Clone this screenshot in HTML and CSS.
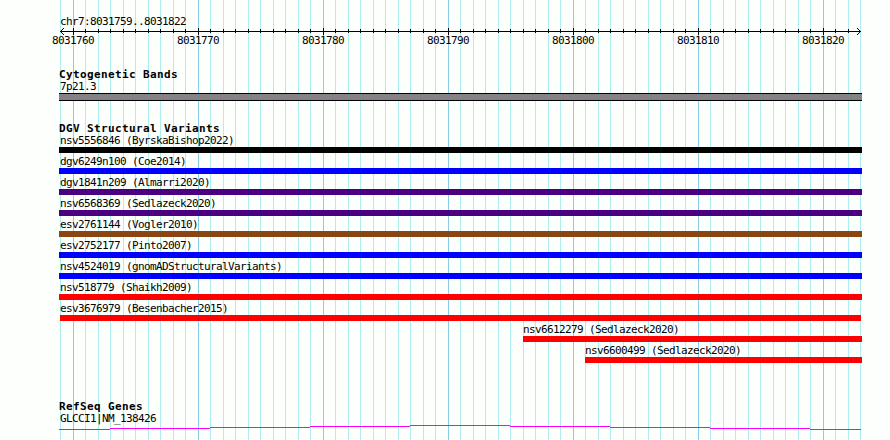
FILE: index.html
```
<!DOCTYPE html>
<html lang="en">
<head>
    <meta charset="UTF-8">
    <title>chr7:8031759..8031822</title>
    <link rel="stylesheet" href="styles.css">
</head>
<body>
    <div class="panel">
        <div class="ruler">
            <p class="label">chr7:8031759..8031822</p>
            <div class="axis">
                <svg class="arrow" width="5" height="7" viewBox="0 0 5 7" shape-rendering="crispEdges">
                    <path d="M1 3h1v1h-1zM2 2h1v3h-1zM3 1h1v1h-1zM3 5h1v1h-1zM4 0h1v1h-1zM4 6h1v1h-1z"/>
                </svg>
                <svg class="arrow" width="5" height="7" viewBox="0 0 5 7" shape-rendering="crispEdges">
                    <path d="M4 3h1v1h-1zM3 2h1v3h-1zM2 1h1v1h-1zM2 5h1v1h-1zM1 0h1v1h-1zM1 6h1v1h-1z"/>
                </svg>
            </div>
            <div class="positions">
                <span>8031760</span>
                <span>8031770</span>
                <span>8031780</span>
                <span>8031790</span>
                <span>8031800</span>
                <span>8031810</span>
                <span>8031820</span>
            </div>
        </div>

        <section class="track cytoband">
            <h2>Cytogenetic Bands</h2>
            <p class="label">7p21.3</p>
            <div class="band"></div>
        </section>

        <section class="track variants">
            <h2>DGV Structural Variants</h2>
            <div class="feature black"><p class="label">nsv5556846 (ByrskaBishop2022)</p></div>
            <div class="feature blue"><p class="label">dgv6249n100 (Coe2014)</p></div>
            <div class="feature indigo"><p class="label">dgv1841n209 (Almarri2020)</p></div>
            <div class="feature indigo"><p class="label">nsv6568369 (Sedlazeck2020)</p></div>
            <div class="feature brown"><p class="label">esv2761144 (Vogler2010)</p></div>
            <div class="feature blue"><p class="label">esv2752177 (Pinto2007)</p></div>
            <div class="feature blue"><p class="label">nsv4524019 (gnomADStructuralVariants)</p></div>
            <div class="feature red"><p class="label">nsv518779 (Shaikh2009)</p></div>
            <div class="feature red inset"><p class="label">esv3676979 (Besenbacher2015)</p></div>
            <div class="feature red from-796"><p class="label">nsv6612279 (Sedlazeck2020)</p></div>
            <div class="feature red from-801"><p class="label">nsv6600499 (Sedlazeck2020)</p></div>
        </section>

        <section class="track genes">
            <h2>RefSeq Genes</h2>
            <p class="label">GLCCI1|NM_138426</p>
            <svg class="intron" width="803" height="5" viewBox="0 0 803 5" shape-rendering="crispEdges">
                <path d="M0 4.5H51M51 3.5H151M151 2.5H251M251 1.5H351M351 .5H451M451 1.5H551M551 2.5H651M651 3.5H751M751 4.5H802"/>
            </svg>
        </section>
    </div>
</body>
</html>
```
FILE: styles.css
```
body {
    margin: 0;
    background: #fdfffc;
    color: #000;
    font-family: "DejaVu Sans Mono", "Liberation Mono", monospace;
    font-size: 11px;
    line-height: 14px;
}

p, h2 {
    margin: 0;
}

/* one base is 12.5px, so the grid repeats every 25px, and every 125px for the tens */
.panel {
    box-sizing: border-box;
    width: 803px;
    height: 440px;
    margin-left: 59px;
    padding-top: 15px;
    background:
        repeating-linear-gradient(to right, transparent 0 14px, #87ceeb 14px 15px, transparent 15px 125px),
        repeating-linear-gradient(to right, transparent 0 1px, #afeeee 1px 2px, transparent 2px 14px, #afeeee 14px 15px, transparent 15px 25px);
}

.label {
    height: 12px;
    padding-left: 1px;
    letter-spacing: -0.622px;
    white-space: nowrap;
}

h2 {
    height: 12px;
    font-size: 11px;
    font-weight: bold;
    letter-spacing: 0.378px;
}

/* axis line, then the long ticks, then the short ones */
.axis {
    display: flex;
    justify-content: space-between;
    height: 7px;
    margin-top: 1px;
    padding-right: 1px;
    background:
        linear-gradient(#000, #000) 1px 3px / 801px 1px no-repeat,
        repeating-linear-gradient(to right, transparent 0 14px, #000 14px 15px, transparent 15px 125px) 0 0 / 801px 7px no-repeat,
        repeating-linear-gradient(to right, #000 0 1px, transparent 1px 12px, #000 12px 13px, transparent 13px 25px) 14px 1px / 776px 4px no-repeat;
}

.arrow {
    display: block;
}

.positions {
    display: grid;
    grid-template-columns: repeat(7, 125px);
    height: 12px;
    margin-left: -7px;
    letter-spacing: -0.622px;
    line-height: 12px;
}

.cytoband {
    margin-top: 21px;
}

.band {
    box-sizing: border-box;
    height: 8px;
    margin-top: 1px;
    border: solid #000;
    border-width: 1px 0;
    background: #848284;
}

.variants {
    margin-top: 21px;
}

.feature {
    height: 13px;
    margin-bottom: 2px;
    border-bottom: 6px solid;
}

.feature .label {
    color: #000;
}

.black { border-color: #000; }
.blue { border-color: #00f; }
.indigo { border-color: #4b0082; }
.brown { border-color: #8b4513; }
.red { border-color: #f00; }

.inset {
    margin-left: 1px;
    margin-right: 1px;
}

.inset .label,
.from-796 .label,
.from-801 .label {
    padding-left: 0;
}

.from-796 { margin-left: 464px; }
.from-801 { margin-left: 526px; }

.genes {
    margin-top: 37px;
}

.intron {
    display: block;
    margin-top: 1px;
    stroke: #f0f;
}
```
